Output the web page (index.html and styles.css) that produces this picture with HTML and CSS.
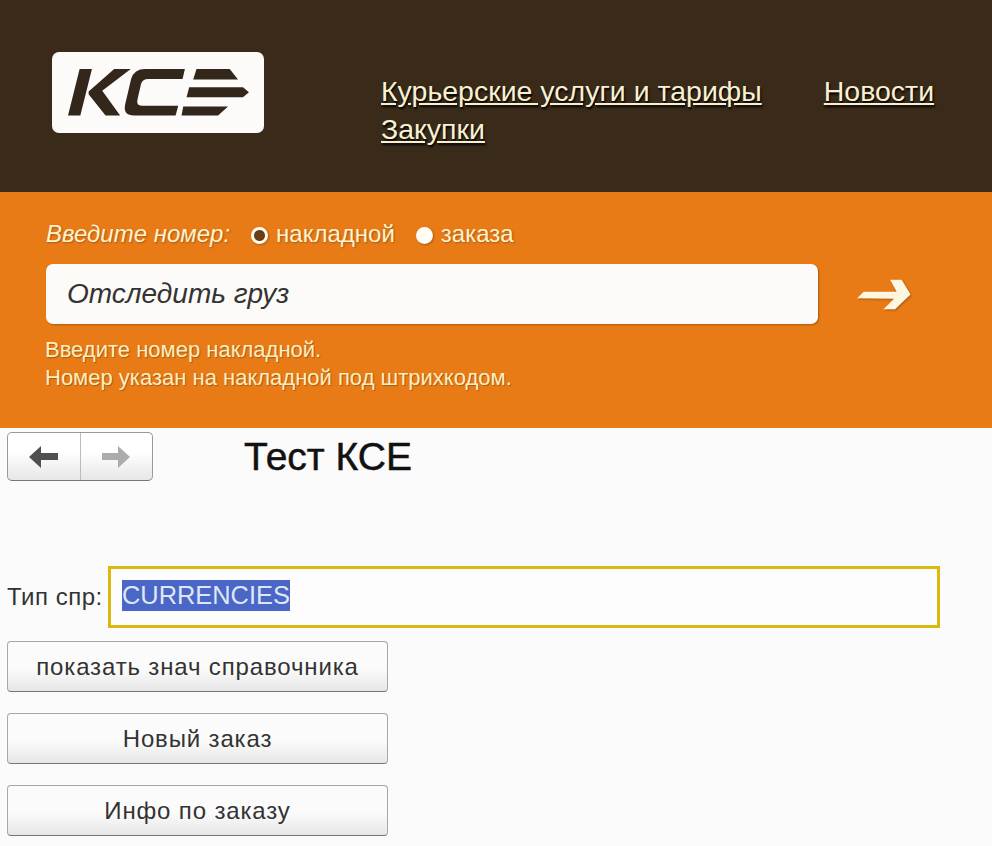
FILE: index.html
```html
<!DOCTYPE html>
<html>
<head>
	<title>Тест КСЕ</title>
	<meta charset="utf-8">
	<link rel="stylesheet" href="styles.css">
</head>
<body>
	<div class="top_bar">
		<div class="logo">
			<svg viewBox="66 64 636 244" width="212" height="81">
				<g fill="#33261a">
					<polygon points="148,115 185,115 150,255 113,255"/>
					<polygon points="175,183 252,115 302,115 216,181 270,255 226,255 175,191"/>
					<path d="M465,115 L345,115 Q312,115 303,145 L285,222 Q278,255 312,255 L437,255 L445,226 L335,226 Q318,226 322,208 L333,160 Q337,145 355,145 L458,145 Z"/>
					<polygon points="500,115 600,115 625,147 490,147"/>
					<polygon points="478,170 640,170 658,185 640,200 470,200"/>
					<polygon points="460,228 595,228 565,255 455,255"/>
				</g>
			</svg>
		</div>
		<div class="top_nav">
			<a href="#">Курьерские услуги и тарифы</a>
			<a href="#">Новости</a>
			<a href="#">Закупки</a>
		</div>
	</div>
	<div class="track">
		<div class="track_type">
			<span class="track_label">Введите номер:</span>
			<span class="radio radio_on"></span><span class="radio_text">накладной</span>
			<span class="radio"></span><span class="radio_text">заказа</span>
		</div>
		<div class="track_row">
			<input class="track_input" type="text" placeholder="Отследить груз">
			<svg class="track_go" viewBox="225 85 170 100" width="57" height="33">
				<polygon fill="#fdf6e0" points="230,146 250,127 350,127 330,90 365,90 392,135 345,180 310,180 342,148"/>
			</svg>
		</div>
		<p class="track_hint">Введите номер накладной.<br>Номер указан на накладной под штрихкодом.</p>
	</div>
	<div class="form">
		<div class="form_head">
			<div class="history">
				<div class="history_btn">
					<svg viewBox="0 0 30 22" width="30" height="22"><polygon fill="#505050" points="0,11 12,0 12,7 29,7 29,14 12,14 12,22"/></svg>
				</div>
				<div class="history_btn">
					<svg viewBox="0 0 30 22" width="30" height="22"><polygon fill="#acacac" points="1,7 17,7 17,0 29,11 17,22 17,14 1,14"/></svg>
				</div>
			</div>
			<h1 class="form_title">Тест КСЕ</h1>
		</div>
		<div class="field">
			<label class="field_label">Тип спр:</label>
			<div class="field_box"><span class="field_value">CURRENCIES</span></div>
		</div>
		<div class="form_btn">показать знач справочника</div>
		<div class="form_btn">Новый заказ</div>
		<div class="form_btn">Инфо по заказу</div>
	</div>
</body>
</html>
```

FILE: styles.css
```css
*{
	box-sizing:border-box;
	margin:0;
	padding:0;
}
body{
	font-family:"Liberation Sans",Arial,sans-serif;
	background:#fbfbfb;
	overflow:hidden;
}
.top_bar{
	height:192px;
	background:#392a1a;
	display:flex;
	padding:52px 0 0 52px;
}
.logo{
	width:212px;
	height:81px;
	background:#fcfbf9;
	border-radius:7px;
}
.logo svg{
	display:block;
}
.top_nav{
	width:570px;
	margin:20px 0 0 117px;
	display:flex;
	flex-wrap:wrap;
	align-content:flex-start;
	column-gap:62px;
	font-size:28.5px;
	line-height:38px;
}
.top_nav a{
	color:#f8f0d2;
	text-shadow:1px 2px 2px #000;
}
.track{
	height:236px;
	background:#e97b17;
	padding:26px 0 0 46px;
}
.track_type{
	display:flex;
	align-items:center;
	height:32px;
	font-size:24px;
	color:#fdf3cf;
	text-shadow:1px 1px 2px #a85a10;
}
.track_label{
	font-style:italic;
	margin-right:21px;
}
.radio{
	width:17px;
	height:17px;
	margin-top:3px;
	border-radius:50%;
	background:#fffdf4;
	box-shadow:1px 1px 2px #a85a10;
	margin-right:8px;
}
.radio_on{
	background:radial-gradient(circle,#6b3d14 0,#6b3d14 5px,#fffdf4 6px);
}
.radio_text{
	margin-right:21px;
}
.track_row{
	display:flex;
	align-items:center;
	margin-top:14px;
}
.track_input{
	width:772px;
	height:60px;
	border:none;
	border-radius:7px;
	background:#fcfbf8;
	box-shadow:1px 1px 2px #a85a10;
	padding-left:21px;
	font-family:"Liberation Sans",Arial,sans-serif;
	font-size:28px;
	font-style:italic;
}
.track_input::placeholder{
	color:#333;
	opacity:1;
}
.track_go{
	margin-left:37px;
	filter:drop-shadow(1px 1px 1px #a85a10);
}
.track_hint{
	margin-top:12px;
	margin-left:-1px;
	font-size:22px;
	line-height:28px;
	color:#fbeec0;
	text-shadow:1px 1px 1px #a85a10;
}
.form{
	padding:4px 0 0 7px;
}
.form_head{
	display:flex;
	height:134px;
}
.history{
	display:flex;
	width:146px;
	height:49px;
	border:1px solid #999;
	border-bottom-color:#777;
	border-radius:5px;
	background:linear-gradient(#fff 40%,#e6e6e6);
}
.history_btn{
	flex:1;
	display:flex;
	align-items:center;
	justify-content:center;
}
.history_btn:first-child{
	border-right:1px solid #bbb;
}
.form_title{
	margin-left:91px;
	font-size:39px;
	font-weight:normal;
	line-height:50px;
	color:#111;
	-webkit-text-stroke:0.5px #111;
}
.field{
	display:flex;
	align-items:center;
	height:62px;
}
.field_label{
	width:101px;
	font-size:24px;
	letter-spacing:0.5px;
	color:#333;
}
.field_box{
	width:832px;
	height:62px;
	border:3px solid #dcb90f;
	background:#fdfdfd;
	padding:11px 0 0 11px;
}
.field_value{
	display:inline-block;
	height:31px;
	line-height:31px;
	font-size:25.4px;
	background:#4a66c6;
	color:#dfe6f5;
}
.form_btn{
	width:381px;
	height:51px;
	margin-bottom:21px;
	border:1px solid #a8a8a8;
	border-bottom-color:#777;
	border-radius:4px;
	background:linear-gradient(#fbfbfb 55%,#e6e6e6);
	text-align:center;
	font-size:24px;
	line-height:50px;
	letter-spacing:0.85px;
	color:#333;
}
.field + .form_btn{
	margin-top:13px;
}
```
